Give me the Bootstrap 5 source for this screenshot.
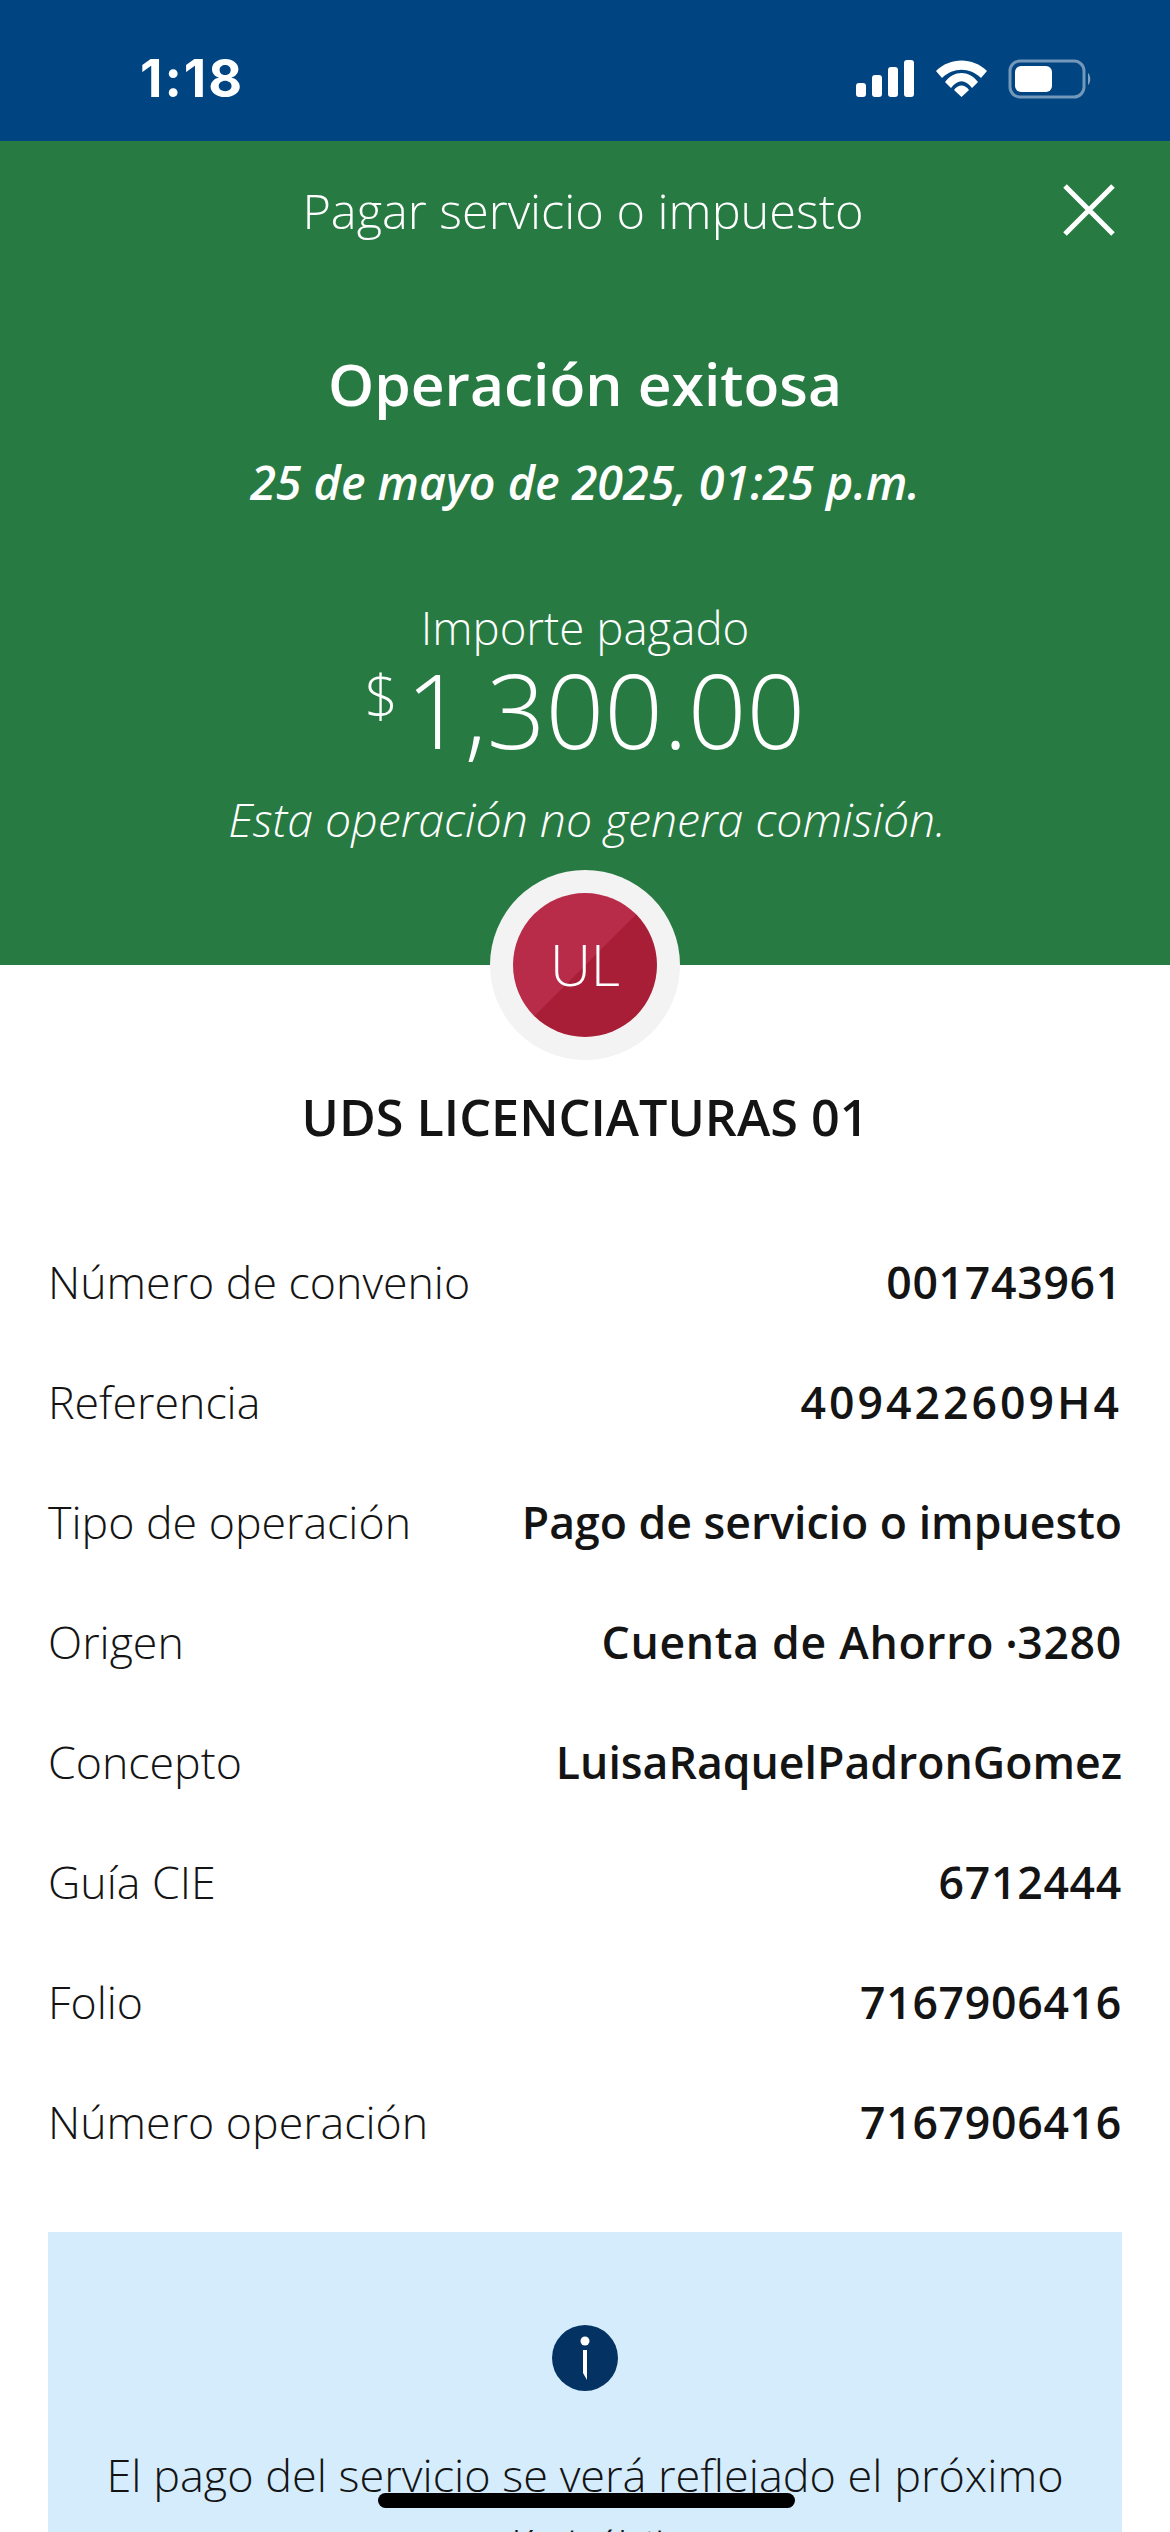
<!DOCTYPE html>
<html lang="es">
<head>
    <meta charset="UTF-8">
    <meta name="viewport" content="width=device-width, initial-scale=1.0">
    <title>Pagar servicio o impuesto</title>
    <link href="https://cdn.jsdelivr.net/npm/bootstrap@5.3.0/dist/css/bootstrap.min.css" rel="stylesheet">
    <style>
        html, body { height: 2532px; overflow: hidden; }
        body { font-family: "Open Sans", "Liberation Sans", sans-serif; color: #141414; background: #fff; }
        .status-strip { height: 141px; background: #004481; padding: 16px 78px 0 140px; }
        .status-time { font-family: "Inter", sans-serif; font-weight: 700; font-size: 52px; line-height: 1; color: #fff; letter-spacing: 2px; }
        .hero { height: 824px; background: #277a41; color: #fff; }
        .hero-top { height: 140px; padding: 0 52px 2px 48px; }
        .hero-title { font-size: 48.7px; font-weight: 300; line-height: 1; }
        .hero-close { right: 55px; top: 43px; }
        .hero-status { font-size: 58.7px; font-weight: 600; line-height: 72px; margin-top: 66px; }
        .hero-date { font-size: 46.6px; font-weight: 600; font-style: italic; line-height: 56px; margin-top: 35px; }
        .hero-label { font-size: 45.6px; font-weight: 300; line-height: 56px; margin-top: 89px; }
        .hero-amount { font-size: 103px; font-weight: 300; line-height: 112px; margin-top: -2px; }
        .hero-cur { font-size: 58px; vertical-align: 32px; margin-right: 8px; line-height: 0; }
        .hero-note { font-size: 46.4px; font-weight: 300; font-style: italic; line-height: 56px; margin-top: 26px; padding-left: 4px; }
        .avatar-ring { width: 190px; height: 190px; background: #f3f3f3; left: 490px; top: 870px; z-index: 2; }
        .avatar-disc { width: 144px; height: 144px; background: linear-gradient(135deg, #b82c4a 50%, #a81e36 50%); color: #fff; font-size: 57px; font-weight: 300; }
        .payee { font-size: 50.3px; font-weight: 600; line-height: 60px; margin-top: 122px; }
        .detail-list { padding: 0 48px; margin-top: 75px; }
        .detail-row { height: 120px; font-size: 44.7px; }
        .detail-label { font-weight: 300; }
        .detail-value { font-weight: 600; font-size: 44.6px; }
        .detail-num { letter-spacing: .7px; }
        .detail-code { letter-spacing: 3px; }
        .detail-dot { font-size: .6em; vertical-align: .2em; }
        .notice { margin: 50px 48px 0; background: #d4ecfc; padding: 93px 40px 200px; font-size: 45px; font-weight: 300; line-height: 72px; }
        .notice-icon { width: 66px; height: 66px; background: #043263; margin-bottom: 48px; }
        .home-bar { width: 417px; height: 15px; background: #000; left: 378px; top: 2493px; z-index: 3; }
    </style>
</head>
<body class="position-relative">
    <div class="status-strip d-flex justify-content-between align-items-center">
        <span class="status-time">1:18</span>
        <svg width="236" height="40" viewBox="0 0 236 40">
            <g fill="#fff">
                <rect x="0" y="24" width="10" height="14" rx="3"/>
                <rect x="16" y="16" width="10" height="22" rx="3"/>
                <rect x="32" y="8" width="10" height="30" rx="3"/>
                <rect x="48" y="1" width="10" height="37" rx="3"/>
                <path d="M80 12 C94 -2 117 -2 131 12 L125 19 C114 8 97 8 86 19 Z"/>
                <path d="M89 23 C98 11 113 11 122 23 L116 29 C109 20 102 20 95 29 Z"/>
                <path d="M98 31 C102 25 109 25 113 31 L105.5 38 Z"/>
            </g>
            <rect x="154" y="2" width="74" height="36" rx="10" fill="none" stroke="#fff" stroke-opacity=".45" stroke-width="3"/>
            <rect x="159" y="7" width="37" height="26" rx="6" fill="#fff"/>
            <path d="M232 14 C235 16 235 24 232 26 Z" fill="#fff" fill-opacity=".5"/>
        </svg>
    </div>

    <div class="hero text-center">
        <div class="hero-top position-relative d-flex align-items-center justify-content-center">
            <span class="hero-title">Pagar servicio o impuesto</span>
            <svg class="hero-close position-absolute" width="52" height="52" viewBox="0 0 52 52">
                <path d="M2 2 L50 50 M50 2 L2 50" stroke="#fff" stroke-width="5" fill="none"/>
            </svg>
        </div>
        <div class="hero-status">Operación exitosa</div>
        <div class="hero-date">25 de mayo de 2025, 01:25 p.m.</div>
        <div class="hero-label">Importe pagado</div>
        <div class="hero-amount"><span class="hero-cur">$</span>1,300.00</div>
        <div class="hero-note">Esta operación no genera comisión.</div>
    </div>

    <div class="avatar-ring position-absolute rounded-circle d-flex align-items-center justify-content-center">
        <div class="avatar-disc rounded-circle d-flex align-items-center justify-content-center">UL</div>
    </div>

    <div class="payee text-center">UDS LICENCIATURAS 01</div>

    <div class="detail-list">
        <div class="detail-row d-flex justify-content-between align-items-center"><span class="detail-label">Número de convenio</span><span class="detail-value detail-num">001743961</span></div>
        <div class="detail-row d-flex justify-content-between align-items-center"><span class="detail-label">Referencia</span><span class="detail-value detail-code">409422609H4</span></div>
        <div class="detail-row d-flex justify-content-between align-items-center"><span class="detail-label">Tipo de operación</span><span class="detail-value">Pago de servicio o impuesto</span></div>
        <div class="detail-row d-flex justify-content-between align-items-center"><span class="detail-label">Origen</span><span class="detail-value detail-num">Cuenta de Ahorro <span class="detail-dot">•</span>3280</span></div>
        <div class="detail-row d-flex justify-content-between align-items-center"><span class="detail-label">Concepto</span><span class="detail-value">LuisaRaquelPadronGomez</span></div>
        <div class="detail-row d-flex justify-content-between align-items-center"><span class="detail-label">Guía CIE</span><span class="detail-value detail-num">6712444</span></div>
        <div class="detail-row d-flex justify-content-between align-items-center"><span class="detail-label">Folio</span><span class="detail-value detail-num">7167906416</span></div>
        <div class="detail-row d-flex justify-content-between align-items-center"><span class="detail-label">Número operación</span><span class="detail-value detail-num">7167906416</span></div>
    </div>

    <div class="notice text-center">
        <div class="notice-icon rounded-circle mx-auto d-flex align-items-center justify-content-center">
            <svg width="12" height="46" viewBox="0 0 12 46"><circle cx="6" cy="6" r="4.5" fill="#fff"/><path d="M4 15 H8 V45 L4 38 Z" fill="#fff"/></svg>
        </div>
        El pago del servicio se verá reflejado el próximo<br>día hábil.
    </div>

    <div class="home-bar position-absolute rounded-pill"></div>
    <script src="https://cdn.jsdelivr.net/npm/bootstrap@5.3.0/dist/js/bootstrap.bundle.min.js"></script>
</body>
</html>
